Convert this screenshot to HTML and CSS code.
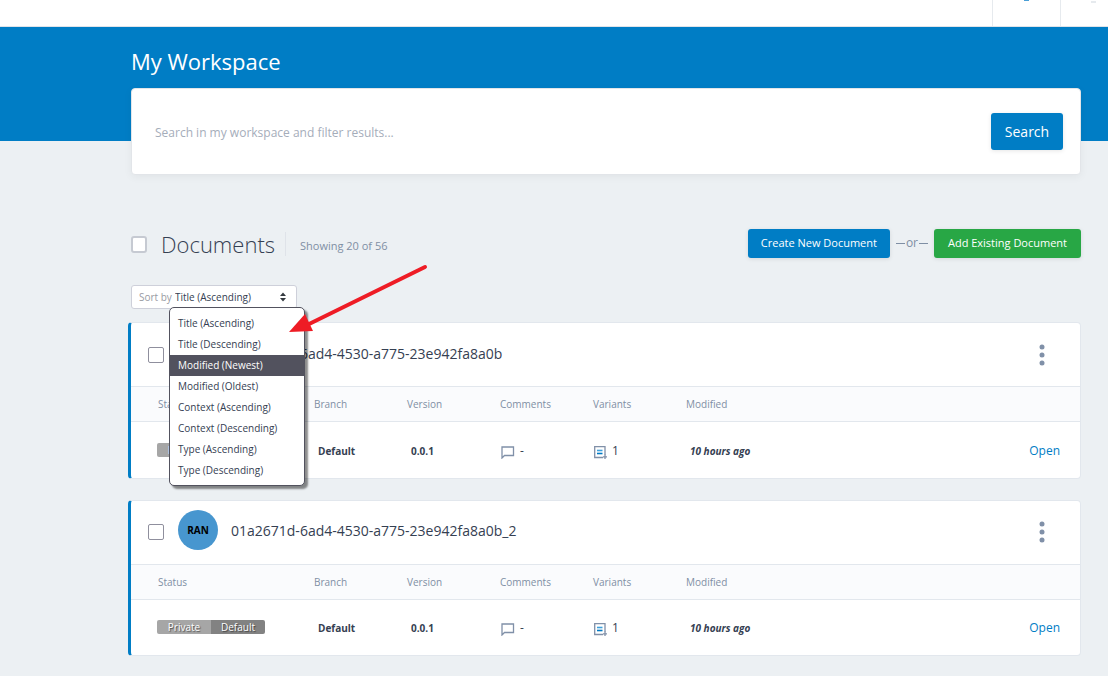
FILE: index.html
```html
<!DOCTYPE html>
<html lang="en">
<head>
<meta charset="utf-8">
<title>My Workspace</title>
<meta name="viewport" content="width=device-width, initial-scale=1">
<link rel="stylesheet" href="styles.css">
</head>
<body>
<svg class="sprite" aria-hidden="true">
  <symbol id="icon-comment" viewBox="0 0 14 13"><path d="M1 1h11.500v8.500H3.500L1 12z" fill="none" stroke="#8090a8" stroke-width="1.300"/></symbol>
  <symbol id="icon-variant" viewBox="0 0 13 13"><path d="M9 11.500H.7V.7h10.300V9" fill="none" stroke="#8090a8" stroke-width="1.300"/><path d="M3 4.500h5.500" stroke="#3da0dc" stroke-width="1.600"/><path d="M3 7.500h5.500" stroke="#0079c4" stroke-width="1.600"/><path d="M11 8.500V13M9 10.800h4" stroke="#8090a8" stroke-width="1.300"/></symbol>
  <symbol id="icon-dots" viewBox="0 0 6 22"><g fill="#8090a8"><circle cx="3" cy="3" r="2.5"/><circle cx="3" cy="11" r="2.5"/><circle cx="3" cy="19" r="2.5"/></g></symbol>
</svg>
<header class="topbar">
  <div class="topbar-cell topbar-notify"><i class="mark mark-blue"></i></div>
  <div class="topbar-cell topbar-user"><i class="mark mark-gray"></i></div>
</header>
<main class="page">
  <section class="hero">
    <h1 class="hero-title">My Workspace</h1>
    <form class="search">
      <input class="search-input" type="text" aria-label="Search in my workspace" placeholder="Search in my workspace and filter results...">
      <button class="btn btn-search" type="button">Search</button>
    </form>
  </section>

  <section class="docs">
    <div class="docs-head">
      <input class="check" type="checkbox" aria-label="Select all documents">
      <h2 class="docs-title">Documents</h2>
      <span class="docs-count">Showing 20 of 56</span>
      <div class="actions">
        <button class="btn btn-create" type="button">Create New Document</button>
        <span class="or">or</span>
        <button class="btn btn-add" type="button">Add Existing Document</button>
      </div>
    </div>

    <div class="sort">
      <label class="sort-label" for="sort">Sort by</label>
      <select class="sort-select" id="sort"><option>Title (Ascending)</option></select>
      <svg class="sort-caret" viewBox="0 0 8 10" aria-hidden="true"><path d="M1 4L4 .5 7 4zM1 6l3 3.500L7 6z" fill="#343a40"/></svg>
      <ul class="menu">
        <li><button class="menu-item" type="button">Title (Ascending)</button></li>
        <li><button class="menu-item" type="button">Title (Descending)</button></li>
        <li><button class="menu-item is-active" type="button">Modified (Newest)</button></li>
        <li><button class="menu-item" type="button">Modified (Oldest)</button></li>
        <li><button class="menu-item" type="button">Context (Ascending)</button></li>
        <li><button class="menu-item" type="button">Context (Descending)</button></li>
        <li><button class="menu-item" type="button">Type (Ascending)</button></li>
        <li><button class="menu-item" type="button">Type (Descending)</button></li>
      </ul>
      <svg class="pointer" viewBox="0 0 140 70" aria-hidden="true"><path d="M136 3L14 63" stroke="#ee1c25" stroke-width="4" stroke-linecap="round"/><path d="M0 68L16 50 24 67z" fill="#ee1c25"/></svg>
    </div>

    <article class="card">
      <div class="card-head">
        <input class="check" type="checkbox" aria-label="Select document">
        <span class="avatar">RAN</span>
        <h3 class="card-title">01a2671d-6ad4-4530-a775-23e942fa8a0b</h3>
        <button class="more" type="button" aria-label="More actions"><svg width="6" height="22"><use href="#icon-dots"/></svg></button>
      </div>
      <table class="meta">
        <colgroup><col class="col-status"><col class="col-info"><col class="col-info"><col class="col-info"><col class="col-info"><col></colgroup>
        <thead><tr><th>Status</th><th>Branch</th><th>Version</th><th>Comments</th><th>Variants</th><th>Modified</th><th></th></tr></thead>
        <tbody><tr>
          <td><span class="badges"><span class="badge">Private</span><span class="badge badge-dark">Default</span></span></td>
          <td>Default</td>
          <td>0.0.1</td>
          <td class="stat-cell"><span class="stat"><svg width="14" height="13"><use href="#icon-comment"/></svg>-</span></td>
          <td class="stat-cell"><span class="stat"><svg width="13" height="13"><use href="#icon-variant"/></svg>1</span></td>
          <td class="when">10 hours ago</td>
          <td class="open"><a href="#">Open</a></td>
        </tr></tbody>
      </table>
    </article>

    <article class="card">
      <div class="card-head">
        <input class="check" type="checkbox" aria-label="Select document">
        <span class="avatar">RAN</span>
        <h3 class="card-title">01a2671d-6ad4-4530-a775-23e942fa8a0b_2</h3>
        <button class="more" type="button" aria-label="More actions"><svg width="6" height="22"><use href="#icon-dots"/></svg></button>
      </div>
      <table class="meta">
        <colgroup><col class="col-status"><col class="col-info"><col class="col-info"><col class="col-info"><col class="col-info"><col></colgroup>
        <thead><tr><th>Status</th><th>Branch</th><th>Version</th><th>Comments</th><th>Variants</th><th>Modified</th><th></th></tr></thead>
        <tbody><tr>
          <td><span class="badges"><span class="badge">Private</span><span class="badge badge-dark">Default</span></span></td>
          <td>Default</td>
          <td>0.0.1</td>
          <td class="stat-cell"><span class="stat"><svg width="14" height="13"><use href="#icon-comment"/></svg>-</span></td>
          <td class="stat-cell"><span class="stat"><svg width="13" height="13"><use href="#icon-variant"/></svg>1</span></td>
          <td class="when">10 hours ago</td>
          <td class="open"><a href="#">Open</a></td>
        </tr></tbody>
      </table>
    </article>
  </section>
</main>
</body>
</html>
```
FILE: styles.css
```css
* { box-sizing: border-box; }
body {
  margin: 0;
  background: #ecf0f3;
  color: #354052;
  font: 12px/18px "Open Sans", "Noto Sans", sans-serif;
}
h1, h2, h3, ul { margin: 0; padding: 0; }
ul { list-style: none; }
button, input, select { font: inherit; color: inherit; }
button { cursor: pointer; }
.sprite { position: absolute; width: 0; height: 0; }

.topbar {
  display: flex;
  justify-content: flex-end;
  height: 27px;
  background: #fff;
  border-bottom: 1px solid #dfe3e9;
}
.topbar-cell {
  display: flex;
  align-items: flex-start;
  justify-content: center;
  border-left: 1px solid #e6eaee;
}
.topbar-notify { width: 68px; }
.topbar-user { width: 48px; padding-left: 18px; }
.mark { width: 5px; height: 1px; }
.mark-blue { background: #4a9fd6; }
.mark-gray { height: 2px; margin-top: 1px; background: #e6eaee; }

.hero {
  padding: 19px 27px 0 131px;
  background: linear-gradient(#007dc5, #007dc5) top / 100% 114px no-repeat;
}
.hero-title {
  color: #fff;
  font-size: 22px;
  font-weight: 400;
  line-height: 30px;
  margin-bottom: 12px;
}
.search {
  display: flex;
  align-items: center;
  height: 87px;
  padding: 0 17px 0 23px;
  background: #fff;
  border: 1px solid #e2e5e9;
  border-radius: 4px;
  box-shadow: 0 2px 8px rgba(0, 0, 0, .05);
}
.search-input {
  flex: 1;
  border: 0;
  padding: 2px 0 0;
  outline: 0;
  background: none;
}
.search-input::placeholder { color: #a5adba; opacity: 1; }

.btn {
  border: 0;
  border-radius: 3px;
  color: #fff;
  background: #007dc5;
  box-shadow: 0 1px 4px rgba(0, 0, 0, .1);
  white-space: nowrap;
}
.btn-search { width: 72px; height: 37px; font-size: 14px; padding: 0; }
.btn-create { height: 29px; width: 142px; padding: 0; font-size: 11px; }
.btn-add { height: 29px; width: 147px; padding: 0; font-size: 11px; background: #28a745; }

.docs { padding: 54px 27px 19px 131px; }
.docs-head { display: flex; align-items: center; height: 30px; }
.check {
  appearance: none;
  flex: none;
  width: 16px;
  height: 16px;
  margin: 0;
  background: #fff;
  border: 1px solid #8f8f9d;
  border-radius: 2px;
}
.docs-head .check { height: 17px; border: 2px solid #c6cad2; border-radius: 3px; }
.docs-title {
  margin-left: 14px;
  font-size: 22px;
  font-weight: 300;
  line-height: 30px;
}
.docs-count {
  margin-left: 10px;
  padding: 5px 0 1px 14px;
  border-left: 1px solid #dfe3e9;
  color: #7f8fa4;
  font-size: 11px;
}
.actions { display: flex; align-items: center; margin: 0 0 2px auto; }
.or {
  display: flex;
  align-items: center;
  gap: 1px;
  margin: 0 6px;
  color: #7f8fa4;
}
.or::before, .or::after { content: ""; width: 9px; height: 1px; background: #7f8fa4; }

.sort {
  position: relative;
  display: flex;
  align-items: center;
  width: 166px;
  height: 24px;
  margin: 26px 0 13px;
  padding: 0 9px 0 7px;
  background: #fff;
  border: 1px solid #ced0da;
  border-radius: 3px;
  font-size: 10px;
}
.sort-label { color: #999ba3; }
.sort-select {
  appearance: none;
  flex: 1;
  min-width: 0;
  margin-left: 3px;
  border: 0;
  padding: 0;
  background: none;
}
.sort-caret { width: 8px; height: 10px; }
.menu {
  position: absolute;
  z-index: 2;
  top: 21px;
  left: 37px;
  width: 136px;
  padding: 5px 0 4px;
  background: #fff;
  border: 1px solid #52525e;
  border-radius: 5px;
  box-shadow: 3px 3px 2px rgba(0, 0, 0, .45);
}
.menu-item {
  display: block;
  width: 100%;
  height: 21px;
  padding: 0 8px 1px;
  border: 0;
  background: none;
  text-align: left;
}
.menu-item.is-active { background: #52525e; color: #fff; }
.pointer {
  position: absolute;
  z-index: 3;
  top: -22px;
  left: 157px;
  width: 140px;
  height: 70px;
}

.card {
  margin-left: -3px;
  margin-bottom: 21px;
  background: #fff;
  border: 1px solid #e2e7ed;
  border-left: 3px solid #007dc5;
  border-radius: 4px;
}
.card:last-child { margin-bottom: 0; }
.card-head { display: flex; align-items: center; height: 63px; padding: 0 31px 0 17px; }
.avatar {
  display: flex;
  align-items: center;
  justify-content: center;
  width: 40px;
  height: 40px;
  margin: 0 13px 4px 14px;
  border-radius: 50%;
  background: #4796cf;
  color: #000;
  font-size: 10px;
  font-weight: 700;
}
.card-title { flex: 1; font-size: 14px; font-weight: 400; line-height: 20px; margin-bottom: 2px; }
.more { display: flex; padding: 0 4px; border: 0; background: none; }

.meta { width: 100%; table-layout: fixed; border-collapse: collapse; }
.col-status { width: 183px; }
.col-info { width: 93px; }
.meta th {
  height: 35px;
  padding: 0;
  border: solid #e2e7ed;
  border-width: 1px 0;
  background: #fafbfd;
  color: #7f8fa4;
  font-size: 10px;
  font-weight: 400;
  text-align: left;
}
.meta td { height: 56px; padding: 2px 0 0 4px; font-size: 10px; font-weight: 700; }
.meta th:first-child { padding-left: 27px; }
.meta td:first-child { padding: 0 0 0 26px; }
.meta .stat-cell { padding-left: 1px; }
.badges {
  display: flex;
  width: 108px;
  border-radius: 2px;
  overflow: hidden;
  color: #fff;
  font-weight: 400;
  line-height: 14px;
  text-align: center;
  text-shadow: 1px 1px 1px rgba(0, 0, 0, .5);
}
.badge { flex: 1; background: #a6a6a6; }
.badge-dark { background: #828282; }
.stat { display: flex; align-items: center; gap: 5px; font-size: 12px; font-weight: 400; }
.stat svg { margin-top: 3px; }
.when { font-style: italic; }
.meta .open { padding-right: 20px; text-align: right; font-size: 12px; font-weight: 400; }
.open a { color: #007dc5; text-decoration: none; }
```
